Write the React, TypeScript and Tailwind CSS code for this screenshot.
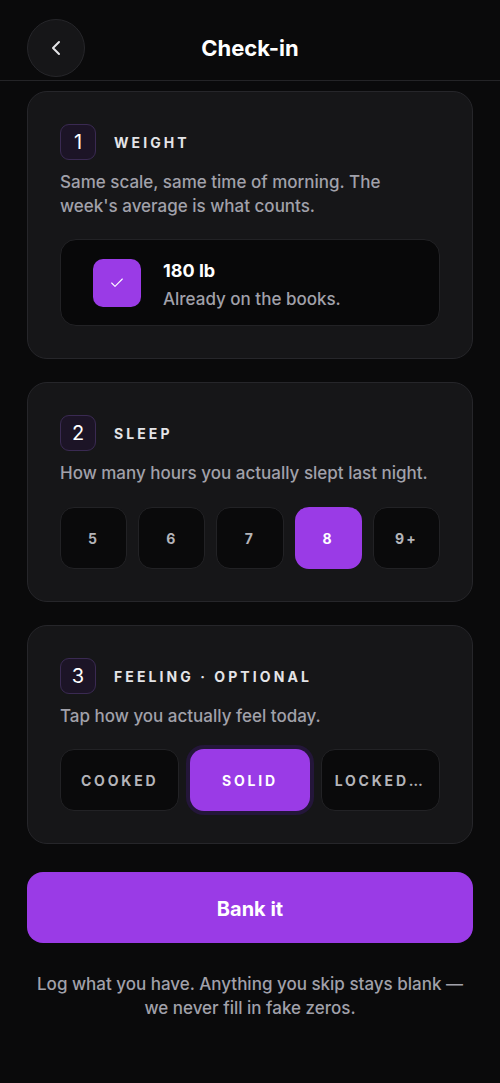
import { Check, ChevronLeft } from 'lucide-react'

const font = { fontFamily: 'Inter, "Noto Sans", sans-serif' }

function StepHeader({ n, label }: { n: number; label: string }) {
  return (
    <div className="flex h-9 items-center gap-[18px]">
      <div className="flex h-9 w-9 items-center justify-center rounded-[9px] border border-[#3a2a52] bg-[#1c1426] text-[20px] text-white">
        {n}
      </div>
      <span className="text-[14px] font-bold tracking-[0.22em] text-[#e4e4e7]">{label}</span>
    </div>
  )
}

function Card({ children }: { children: React.ReactNode }) {
  return (
    <section className="rounded-[20px] border border-[#26262a] bg-[#161618] p-8">{children}</section>
  )
}

const hours = ['5', '6', '7', '8', '9+']
const feelings = ['COOKED', 'SOLID', 'LOCKED IN']

export default function App() {
  return (
    <div className="min-h-[1083px] w-full bg-[#0a0a0b]" style={font}>
      <header className="relative flex h-[81px] items-center justify-center border-b border-[#242427] pt-[16px]">
        <button
          type="button"
          className="absolute left-[27px] top-[19px] flex h-[58px] w-[58px] items-center justify-center rounded-full border border-[#26262a] bg-[#161618] text-[#e4e4e7]"
        >
          <ChevronLeft size={24} strokeWidth={2} />
        </button>
        <h1 className="text-[22px] font-bold text-white">Check-in</h1>
      </header>

      <main className="flex flex-col px-[27px] pt-[10px]">
        <div className="flex flex-col gap-[23px]">
          <Card>
            <StepHeader n={1} label="WEIGHT" />
            <p className="mt-[10px] text-[17px] font-medium leading-6 text-[#a1a1aa]">
              Same scale, same time of morning. The week's average is what counts.
            </p>
            <div className="mt-[21px] flex h-[87px] items-center gap-[22px] rounded-2xl border border-[#222225] bg-[#080809] px-8">
              <div className="flex h-12 w-12 items-center justify-center rounded-[10px] bg-[#9a3be6] text-white">
                <Check size={16} strokeWidth={1.6} />
              </div>
              <div className="pt-1">
                <div className="mb-1 text-[18px] font-bold leading-6 text-white">180 lb</div>
                <div className="text-[17px] font-medium leading-6 text-[#a1a1aa]">Already on the books.</div>
              </div>
            </div>
          </Card>

          <Card>
            <StepHeader n={2} label="SLEEP" />
            <p className="mt-[10px] text-[17px] font-medium leading-6 text-[#a1a1aa]">
              How many hours you actually slept last night.
            </p>
            <div className="mt-[22px] grid grid-cols-5 gap-[11px]">
              {hours.map((h) => {
                const on = h === '8'
                return (
                  <button
                    key={h}
                    type="button"
                    className={
                      on
                        ? 'flex h-[62px] items-center justify-center rounded-[14px] bg-[#9a3be6] text-[14px] font-bold tracking-[0.15em] text-white'
                        : 'flex h-[62px] items-center justify-center rounded-[14px] border border-[#222225] bg-[#0a0a0b] text-[14px] font-bold tracking-[0.15em] text-[#b4b4b9]'
                    }
                  >
                    {h}
                  </button>
                )
              })}
            </div>
          </Card>

          <Card>
            <StepHeader n={3} label="FEELING · OPTIONAL" />
            <p className="mt-[10px] text-[17px] font-medium leading-6 text-[#a1a1aa]">Tap how you actually feel today.</p>
            <div className="mt-[21px] grid grid-cols-3 gap-[11px]">
              {feelings.map((f) => {
                const on = f === 'SOLID'
                return (
                  <button
                    key={f}
                    type="button"
                    className={
                      on
                        ? 'flex h-[62px] items-center justify-center rounded-[14px] bg-[#9a3be6] px-3 text-[14px] font-bold tracking-[0.2em] text-white shadow-[0_0_0_4px_#24163a]'
                        : 'flex h-[62px] min-w-0 items-center justify-center rounded-[14px] border border-[#222225] bg-[#0a0a0b] px-[13px] text-[14px] font-bold tracking-[0.2em] text-[#b4b4b9]'
                    }
                  >
                    <span className="truncate">{f}</span>
                  </button>
                )
              })}
            </div>
          </Card>
        </div>

        <button
          type="button"
          className="mt-[28px] h-[71px] w-full rounded-2xl bg-[#9a3be6] pt-[3px] text-[20px] font-bold text-white"
        >
          Bank it
        </button>

        <p className="mt-[29px] text-center text-[17px] font-medium leading-6 text-[#a1a1aa]">
          Log what you have. Anything you skip stays blank — we never fill in fake zeros.
        </p>
      </main>
    </div>
  )
}
